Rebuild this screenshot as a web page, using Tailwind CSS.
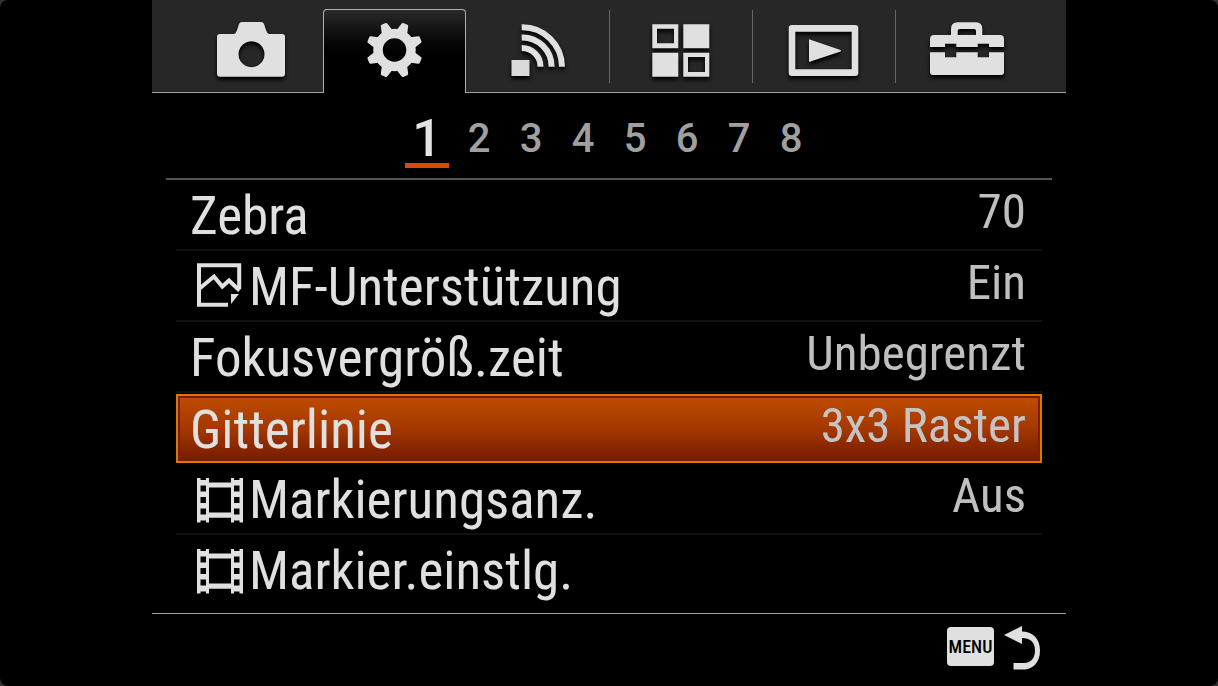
<!DOCTYPE html>
<html lang="de">
<head>
  <meta charset="UTF-8" />
  <meta name="viewport" content="width=device-width, initial-scale=1.0" />
  <title>Kameramenü</title>
  <script src="https://cdn.jsdelivr.net/npm/@tailwindcss/browser@4"></script>
</head>
<body class="bg-[#333] font-['Roboto_Condensed','Liberation_Sans_Narrow','Liberation_Sans',sans-serif] text-[#e0e0e0]">
  <div class="min-h-screen bg-black rounded-lg">
    <main class="w-full max-w-[914px] mx-auto">

      <!-- Tabs -->
      <nav class="grid grid-cols-6 h-[93px] px-7 bg-[#272727] border-b border-[#a0a0a0]" aria-label="Menü">
        <button class="flex justify-center items-start h-[73px] mt-[10px] pt-[9px]" aria-label="Kamera">
          <svg class="w-[81px] h-16 drop-shadow-[0_3px_2px_#000]" viewBox="0 0 81 64" fill="#e0e0e0">
            <path fill-rule="evenodd" d="M9 15H23Q25 14.500 26 11L28 5Q28.700 3 31 3H50Q52.300 3 53 5L55 11Q56 14.500 58 15H71Q74 15 74 18V54.500Q74 57.700 71 57.700H9Q6 57.700 6 54.500V18Q6 15 9 15ZM40.500 22.300a13 13 0 1 0 .01 0Z" />
          </svg>
        </button>
        <button class="flex justify-center items-start h-[84px] mt-[9px] -mb-px pt-[9px] rounded-t-[4px] border border-b-0 border-[#b0b0b0] bg-linear-to-b from-[#2a2a2a] to-black to-70%" aria-label="Einstellungen" aria-current="true">
          <svg class="w-[81px] h-16" viewBox="0 0 81 64" fill="#e0e0e0">
            <defs>
              <path id="tooth" d="M-6 -18L-3.600 -27Q-3.300 -28.300 -2.200 -28.300H2.200Q3.300 -28.300 3.600 -27L6 -18Z" />
            </defs>
            <g transform="translate(40.500 31)">
              <circle r="16.500" fill="none" stroke="#e0e0e0" stroke-width="9.500" />
              <use href="#tooth" transform="rotate(22.500)" />
              <use href="#tooth" transform="rotate(67.500)" />
              <use href="#tooth" transform="rotate(112.500)" />
              <use href="#tooth" transform="rotate(157.500)" />
              <use href="#tooth" transform="rotate(202.500)" />
              <use href="#tooth" transform="rotate(247.500)" />
              <use href="#tooth" transform="rotate(292.500)" />
              <use href="#tooth" transform="rotate(337.500)" />
            </g>
          </svg>
        </button>
        <button class="flex justify-center items-start h-[73px] mt-[10px] pt-[9px]" aria-label="Drahtlos">
          <svg class="w-[81px] h-16 drop-shadow-[0_3px_2px_#000]" viewBox="0 0 81 64">
            <rect x="14.500" y="41" width="18" height="16" fill="#dadada" />
            <g fill="none" stroke="#e0e0e0" stroke-width="6">
              <path d="M24.700 8.200A39.700 39.700 0 0 1 65 47.700" />
              <path d="M24.700 18.400A29.300 29.300 0 0 1 54.600 47.700" />
              <path d="M24.700 29A18.700 18.700 0 0 1 43.500 47.700" />
            </g>
          </svg>
        </button>
        <button class="flex justify-center items-start h-[73px] mt-[10px] pt-[9px] pr-px border-l border-[#666]" aria-label="Applikation">
          <svg class="w-[81px] h-16 drop-shadow-[0_3px_2px_#000]" viewBox="0 0 81 64" fill="#e0e0e0">
            <path fill-rule="evenodd" d="M12.300 5.300h26v24h-26ZM17 9.700v14.600h17V9.700Z" />
            <path d="M43.300 5.300h26v24h-26ZM12.300 33.700h26v24h-26Z" />
            <path fill-rule="evenodd" d="M43.300 33.700h26v24h-26ZM48 38v15h17V38Z" />
          </svg>
        </button>
        <button class="flex justify-center items-start h-[73px] mt-[10px] pt-[9px] pr-px border-l border-[#666]" aria-label="Wiedergabe">
          <svg class="w-[81px] h-16 drop-shadow-[0_3px_2px_#000]" viewBox="0 0 81 64" fill="#e0e0e0">
            <path fill-rule="evenodd" d="M9 6H72Q75.300 6 75.300 9V54Q75.300 57 72 57H9Q5.700 57 5.700 54V9Q5.700 6 9 6ZM12.300 12.700V50.300H68.700V12.700Z" />
            <path d="M26 20.300L57.500 31Q58.500 31.700 57.500 32.400L26 43Z" />
          </svg>
        </button>
        <button class="flex justify-center items-start h-[73px] mt-[10px] pt-[9px] pr-px border-l border-[#666]" aria-label="Setup">
          <svg class="w-[81px] h-16 drop-shadow-[0_3px_2px_#000]" viewBox="0 0 81 64" fill="#e0e0e0">
            <path d="M25 17V10Q25 3.300 31.500 3.300H50Q56.300 3.300 56.300 10V17H50V12Q50 10 48 10H34Q31.700 10 31.700 12V17Z" />
            <path d="M8 16H74Q78 16 78 20V28H63V24.700H51.700V28H30.300V24.700H19V28H4V20Q4 16 8 16Z" />
            <path d="M4 33.300H19V38.300H30.300V33.300H51.700V38.300H63V33.300H78V53Q78 56 75 56H7Q4 56 4 53Z" />
          </svg>
        </button>
      </nav>

      <!-- Pages -->
      <nav class="flex justify-center gap-2 h-[85px] pt-[10px] font-['Roboto',sans-serif] text-[40px] leading-[72px] font-medium text-[#a0a0a0]" aria-label="Seiten">
        <a href="#1" class="w-11 h-[65px] text-center text-[52px] text-[#e4e4e4] border-b-[5px] border-[#d84c00]" aria-current="page">1</a>
        <a href="#2" class="w-11 text-center">2</a>
        <a href="#3" class="w-11 text-center">3</a>
        <a href="#4" class="w-11 text-center">4</a>
        <a href="#5" class="w-11 text-center">5</a>
        <a href="#6" class="w-11 text-center">6</a>
        <a href="#7" class="w-11 text-center">7</a>
        <a href="#8" class="w-11 text-center">8</a>
      </nav>

      <!-- Settings -->
      <div class="mx-[14px] border-t-2 border-[#555]"></div>
      <ul class="mx-6 text-[53px] leading-[72px]">
        <li class="h-[71px] border-b-2 border-[#111]">
          <button class="flex justify-between w-full px-4 pl-[14px]">
            <span>Zebra</span>
            <span class="-mt-1 text-[49px] text-[#bfbfbf]">70</span>
          </button>
        </li>
        <li class="h-[71px] border-b-2 border-[#111]">
          <button class="flex justify-between w-full px-4 pl-[14px]">
            <span class="flex">
              <svg class="w-[59px] h-[69px]" viewBox="0 0 59 69" fill="none" stroke="#e0e0e0" stroke-width="4">
                <path d="M38 53.800H9V14.300H49.200V38" />
                <path d="M9 38L24 25.500L32.300 35.500L39 29.500L49.500 39.500" />
                <path d="M41 43H49L41 53Z" fill="#e0e0e0" stroke="none" />
              </svg>
              MF-Unterstützung
            </span>
            <span class="-mt-1 text-[49px] text-[#bfbfbf]">Ein</span>
          </button>
        </li>
        <li class="h-[71px] border-b-2 border-[#111]">
          <button class="flex justify-between w-full px-4 pl-[14px]">
            <span>Fokusvergröß.zeit</span>
            <span class="-mt-1 text-[49px] text-[#bfbfbf]">Unbegrenzt</span>
          </button>
        </li>
        <li class="h-[71px] py-px">
          <button class="flex justify-between w-full h-[69px] px-[14px] pl-3 leading-[68px] border-2 border-[#d87a00] bg-linear-to-b from-[#c04c00] via-[#a43800] to-[#761a00] shadow-[inset_0_0_0_2px_#7a1c00]" aria-current="true">
            <span>Gitterlinie</span>
            <span class="-mt-1 text-[49px] text-[#c4c4c4]">3x3 Raster</span>
          </button>
        </li>
        <li class="h-[71px] border-b-2 border-[#111]">
          <button class="flex justify-between w-full px-4 pl-[14px]">
            <span class="flex">
              <svg class="w-[59px] h-[69px]" viewBox="0 0 59 69" fill="#e0e0e0">
                <path id="strip" fill-rule="evenodd" d="M7 14H10.500V16H16V14H19V58.500H16V56.500H10.500V58.500H7ZM10.500 21.500V27.500H16V21.500ZM10.500 33V39H16V33ZM10.500 44.500V50.500H16V44.500Z" />
                <use href="#strip" transform="translate(60 0) scale(-1 1)" />
                <path d="M19 18.500H41V23.500H19ZM19 48.500H41V53.700H19Z" />
              </svg>
              Markierungsanz.
            </span>
            <span class="-mt-1 text-[49px] text-[#bfbfbf]">Aus</span>
          </button>
        </li>
        <li class="h-[71px]">
          <button class="flex justify-between w-full px-4 pl-[14px]">
            <span class="flex">
              <svg class="w-[59px] h-[69px]" viewBox="0 0 59 69" fill="#e0e0e0">
                <use href="#strip" />
                <use href="#strip" transform="translate(60 0) scale(-1 1)" />
                <path d="M19 18.500H41V23.500H19ZM19 48.500H41V53.700H19Z" />
              </svg>
              Markier.einstlg.
            </span>
          </button>
        </li>
      </ul>

      <!-- Footer -->
      <footer class="mt-[7px] border-t border-[#a0a0a0] pt-3 px-[26px]">
        <button class="flex gap-[10px] ml-auto" aria-label="Menü zurück">
          <span class="w-[47px] h-[39px] mt-px rounded bg-[#e0e0e0] text-center text-lg leading-[39px] font-medium text-black">MENU</span>
          <svg class="w-9 h-11" viewBox="0 0 36 44" fill="#e0e0e0">
            <path d="M0 9L18 0V5.500C28 5.500 36 12 36 24.500C36 37 28 43.500 20 43.500H9.500V37H20C26 37 31 33 31 24.500C31 16 26 12 18 12V18Z" />
          </svg>
        </button>
      </footer>
    </main>
  </div>
</body>
</html>
